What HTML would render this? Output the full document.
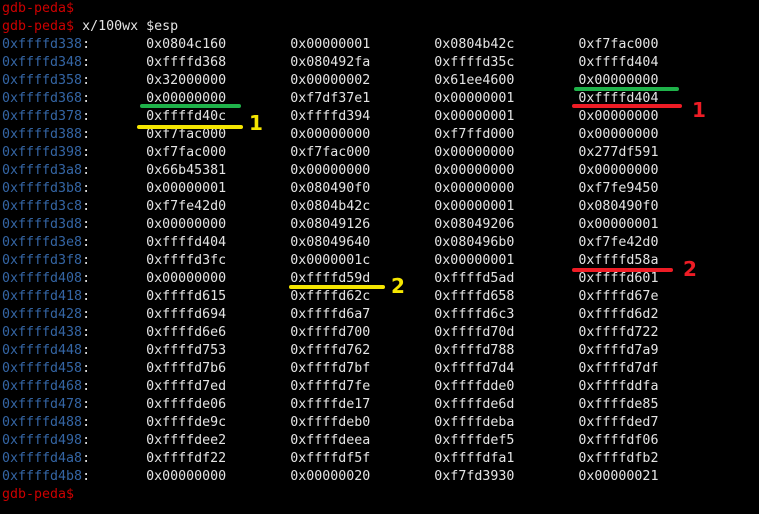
<!DOCTYPE html>
<html><head><meta charset="utf-8"><style>
html,body{margin:0;padding:0;background:#000;}
body{width:759px;height:514px;overflow:hidden;position:relative;}
pre{margin:0;position:absolute;left:2px;top:0;font-family:"DejaVu Sans Mono","Liberation Mono",monospace;font-size:13.3px;line-height:18px;color:#e4e4e4;tab-size:18;-moz-tab-size:18;}
.r{color:#cc0000}.b{color:#3465a4}
.l{position:absolute;height:4px;border-radius:2px}
.g{background:#1fb24a}.y{background:#f5e600}.rd{background:#ee1c25}
.n{position:absolute;font-family:"DejaVu Sans","Liberation Sans",sans-serif;font-weight:bold;font-size:20px;line-height:20px}
</style></head><body>
<pre><span class="r">gdb-peda$</span>
<span class="r">gdb-peda$</span> x/100wx $esp
<span class="b">0xffffd338</span>:	0x0804c160	0x00000001	0x0804b42c	0xf7fac000
<span class="b">0xffffd348</span>:	0xffffd368	0x080492fa	0xffffd35c	0xffffd404
<span class="b">0xffffd358</span>:	0x32000000	0x00000002	0x61ee4600	0x00000000
<span class="b">0xffffd368</span>:	0x00000000	0xf7df37e1	0x00000001	0xffffd404
<span class="b">0xffffd378</span>:	0xffffd40c	0xffffd394	0x00000001	0x00000000
<span class="b">0xffffd388</span>:	0xf7fac000	0x00000000	0xf7ffd000	0x00000000
<span class="b">0xffffd398</span>:	0xf7fac000	0xf7fac000	0x00000000	0x277df591
<span class="b">0xffffd3a8</span>:	0x66b45381	0x00000000	0x00000000	0x00000000
<span class="b">0xffffd3b8</span>:	0x00000001	0x080490f0	0x00000000	0xf7fe9450
<span class="b">0xffffd3c8</span>:	0xf7fe42d0	0x0804b42c	0x00000001	0x080490f0
<span class="b">0xffffd3d8</span>:	0x00000000	0x08049126	0x08049206	0x00000001
<span class="b">0xffffd3e8</span>:	0xffffd404	0x08049640	0x080496b0	0xf7fe42d0
<span class="b">0xffffd3f8</span>:	0xffffd3fc	0x0000001c	0x00000001	0xffffd58a
<span class="b">0xffffd408</span>:	0x00000000	0xffffd59d	0xffffd5ad	0xffffd601
<span class="b">0xffffd418</span>:	0xffffd615	0xffffd62c	0xffffd658	0xffffd67e
<span class="b">0xffffd428</span>:	0xffffd694	0xffffd6a7	0xffffd6c3	0xffffd6d2
<span class="b">0xffffd438</span>:	0xffffd6e6	0xffffd700	0xffffd70d	0xffffd722
<span class="b">0xffffd448</span>:	0xffffd753	0xffffd762	0xffffd788	0xffffd7a9
<span class="b">0xffffd458</span>:	0xffffd7b6	0xffffd7bf	0xffffd7d4	0xffffd7df
<span class="b">0xffffd468</span>:	0xffffd7ed	0xffffd7fe	0xffffdde0	0xffffddfa
<span class="b">0xffffd478</span>:	0xffffde06	0xffffde17	0xffffde6d	0xffffde85
<span class="b">0xffffd488</span>:	0xffffde9c	0xffffdeb0	0xffffdeba	0xffffded7
<span class="b">0xffffd498</span>:	0xffffdee2	0xffffdeea	0xffffdef5	0xffffdf06
<span class="b">0xffffd4a8</span>:	0xffffdf22	0xffffdf5f	0xffffdfa1	0xffffdfb2
<span class="b">0xffffd4b8</span>:	0x00000000	0x00000020	0xf7fd3930	0x00000021
<span class="r">gdb-peda$</span></pre>
<div class="l g" style="left:140px;top:104px;width:101px"></div>
<div class="l y" style="left:137px;top:125px;width:106px"></div>
<div class="n" style="left:249px;top:113px;color:#f5e600">1</div>
<div class="l g" style="left:574px;top:87px;width:105px"></div>
<div class="l rd" style="left:572px;top:104px;width:110px"></div>
<div class="n" style="left:692px;top:100px;color:#ee1c25">1</div>
<div class="l y" style="left:289px;top:285px;width:96px"></div>
<div class="n" style="left:391px;top:276px;color:#f5e600">2</div>
<div class="l rd" style="left:572px;top:268px;width:101px"></div>
<div class="n" style="left:683px;top:259px;color:#ee1c25">2</div>
</body></html>
